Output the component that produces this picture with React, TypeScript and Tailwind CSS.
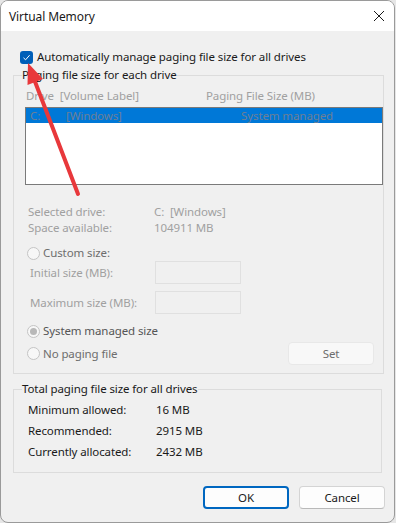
import { ReactNode } from 'react'

const font = { fontFamily: '"Noto Sans", "Open Sans", sans-serif', letterSpacing: '-0.1px' }

function Radio({ label, checked, disabled }: { label: string; checked?: boolean; disabled?: boolean }) {
  return (
    <div className="flex items-center h-[16px]">
      <span className="w-[13px] h-[13px] rounded-full border border-[#c4c4c4] bg-[#f7f7f7] flex items-center justify-center ml-[26px]">
        {checked && <span className="w-[7px] h-[7px] rounded-full bg-[#b8b8b8]" />}
      </span>
      <span className={disabled ? 'ml-[3px] text-[#6d6d6d]' : 'ml-[3px] text-[#555]'}>{label}</span>
    </div>
  )
}

function Group({ title, className, children }: { title: string; className?: string; children: ReactNode }) {
  return (
    <fieldset className={'border border-[#dcdcdc] pl-[8px] ml-[12px] w-[369px] ' + (className ?? '')}>
      <legend className="px-0 leading-[16px] text-[#1a1a1a]">{title}</legend>
      <div className="-ml-[8px]">{children}</div>
    </fieldset>
  )
}

function Btn({ label, primary, className }: { label: string; primary?: boolean; className?: string }) {
  return (
    <div
      className={
        'h-[23px] w-[86px] rounded-[4px] flex items-center justify-center bg-[#fdfdfd] text-[#1a1a1a] ' +
        (primary ? 'border-[2px] border-[#0067c0]' : 'border border-[#d4d4d4] border-b-[#b9b9b9]') +
        ' ' + (className ?? '')
      }
    >
      {label}
    </div>
  )
}

export default function App() {
  return (
    <div className="w-[396px] h-[523px] bg-[#e6e6e6] relative overflow-hidden text-[11.5px] leading-[16px]" style={font}>
      <div className="w-[395px] h-[523px] border border-[#9a9a9a] rounded-[8px] overflow-hidden bg-[#f0f0f0] flex flex-col">
        {/* title bar */}
        <div className="h-[30px] bg-white flex items-center justify-between pl-[8px] pr-[8px] shrink-0">
          <span className="text-[#1a1a1a] mt-[1px] text-[12px]">Virtual Memory</span>
          <svg width="12" height="12" viewBox="0 0 12 12" className="mr-[1px]">
            <path d="M1 1L11 11M11 1L1 11" stroke="#1a1a1a" strokeWidth="1" />
          </svg>
        </div>

        <div className="flex flex-col">
          {/* checkbox */}
          <div className="flex items-center mt-[18px] h-[16px]">
            <span className="ml-[19px] w-[13px] h-[13px] rounded-[3px] bg-[#005fb8] flex items-center justify-center">
              <svg width="9" height="9" viewBox="0 0 9 9">
                <path d="M1.5 4.8L3.6 6.8L7.6 2.2" stroke="white" strokeWidth="1" fill="none" />
              </svg>
            </span>
            <span className="ml-[4px] text-[#1a1a1a]">Automatically manage paging file size for all drives</span>
          </div>

          <Group title="Paging file size for each drive" className="mt-[2px] h-[307px]">
            <div className="flex text-[#a0a0a0] mt-[5px] h-[16px]">
              <span className="ml-[12px] w-[180px]">Drive&nbsp;&nbsp;[Volume Label]</span>
              <span>Paging File Size (MB)</span>
            </div>
            <div className="mt-[3px] ml-[11px] w-[358px] h-[78px] border border-[#7a7a7a] bg-white">
              <div className="h-[15px] bg-[#0078d7] flex items-center text-[#6d7f95]">
                <span className="ml-[4px] w-[36px]">C:</span>
                <span className="w-[175px]">[Windows]</span>
                <span>System managed</span>
              </div>
            </div>

            <div className="mt-[19px] text-[#a0a0a0]">
              <div className="flex h-[16px]">
                <span className="ml-[14px] w-[126px]">Selected drive:</span>
                <span>C:&nbsp;&nbsp;[Windows]</span>
              </div>
              <div className="flex h-[16px]">
                <span className="ml-[14px] w-[126px]">Space available:</span>
                <span>104911 MB</span>
              </div>
            </div>

            <div className="mt-[9px] -ml-[13px]">
              <Radio label="Custom size:" disabled />
            </div>
            <div className="flex items-center h-[23px] text-[#a0a0a0]">
              <span className="ml-[16px] w-[125px]">Initial size (MB):</span>
              <span className="w-[86px] h-[23px] border border-[#e0e0e0] bg-[#f0f0f0]" />
            </div>
            <div className="flex items-center h-[23px] mt-[7px] text-[#a0a0a0]">
              <span className="ml-[16px] w-[125px]">Maximum size (MB):</span>
              <span className="w-[86px] h-[23px] border border-[#e0e0e0] bg-[#f0f0f0]" />
            </div>
            <div className="mt-[9px] -ml-[13px]">
              <Radio label="System managed size" checked />
            </div>
            <div className="flex items-center justify-between mt-[3px] -ml-[13px] pr-[9px]">
              <Radio label="No paging file" disabled />
              <Btn label="Set" className="!border !border-[#e8e8e8] !text-[#6d6d6d] !bg-[#f8f8f8]" />
            </div>
          </Group>

          <Group title="Total paging file size for all drives" className="mt-[7px] h-[92px]">
            <div className="text-[#1a1a1a] mt-[5px] flex flex-col gap-[5px]">
              <div className="flex h-[16px]">
                <span className="ml-[14px] w-[128px]">Minimum allowed:</span>
                <span>16 MB</span>
              </div>
              <div className="flex h-[16px]">
                <span className="ml-[14px] w-[128px]">Recommended:</span>
                <span>2915 MB</span>
              </div>
              <div className="flex h-[16px]">
                <span className="ml-[14px] w-[128px]">Currently allocated:</span>
                <span>2432 MB</span>
              </div>
            </div>
          </Group>

          <div className="flex justify-end gap-[10px] mt-[13px] pr-[9px]">
            <Btn label="OK" primary />
            <Btn label="Cancel" />
          </div>
        </div>
      </div>

      {/* red annotation arrow */}
      <svg width="396" height="523" className="absolute left-0 top-0 pointer-events-none">
        <line x1="78" y1="194" x2="34" y2="79" stroke="#e8383b" strokeWidth="4" strokeLinecap="round" />
        <path d="M28 63 L43 79 L27.5 85 Z" fill="#e8383b" />
      </svg>
    </div>
  )
}
